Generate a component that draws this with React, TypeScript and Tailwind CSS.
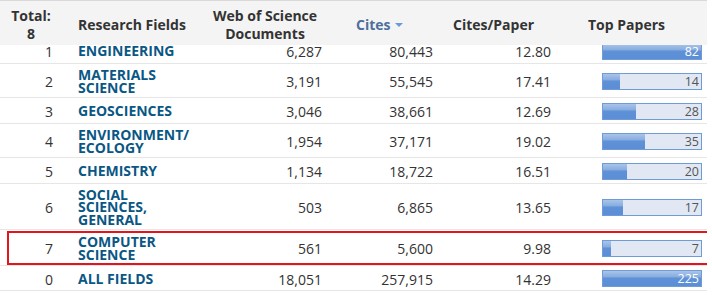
import React from 'react'

type Row = { rank: number; field: string[]; docs: string; cites: string; cpp: string; top: number; h: string; marked?: boolean }

const rows: Row[] = [
  { rank: 1, field: ['ENGINEERING'], docs: '6,287', cites: '80,443', cpp: '12.80', top: 82, h: 'h-[26px]' },
  { rank: 2, field: ['MATERIALS', 'SCIENCE'], docs: '3,191', cites: '55,545', cpp: '17.41', top: 14, h: 'h-[34px]' },
  { rank: 3, field: ['GEOSCIENCES'], docs: '3,046', cites: '38,661', cpp: '12.69', top: 28, h: 'h-[26px]' },
  { rank: 4, field: ['ENVIRONMENT/', 'ECOLOGY'], docs: '1,954', cites: '37,171', cpp: '19.02', top: 35, h: 'h-[34px]' },
  { rank: 5, field: ['CHEMISTRY'], docs: '1,134', cites: '18,722', cpp: '16.51', top: 20, h: 'h-[26px]' },
  { rank: 6, field: ['SOCIAL', 'SCIENCES,', 'GENERAL'], docs: '503', cites: '6,865', cpp: '13.65', top: 17, h: 'h-[46px]' },
  { rank: 7, field: ['COMPUTER', 'SCIENCE'], docs: '561', cites: '5,600', cpp: '9.98', top: 7, h: 'h-[36px]', marked: true },
  { rank: 0, field: ['ALL FIELDS'], docs: '18,051', cites: '257,915', cpp: '14.29', top: 225, h: 'h-[25px]' },
]

const MAX = 82
const cols = 'grid grid-cols-[62px_138px_130px_111px_118px_1fr]'

function Bar({ value }: { value: number }) {
  const pct = Math.min(100, (value / MAX) * 100)
  const full = pct >= 100
  return (
    <div className="relative w-[100px] h-[17px] border border-[#6f9bd6] bg-[#e1e8f4]">
      <div
        className="absolute left-0 top-0 bottom-0 bg-[linear-gradient(to_bottom,#a9c4ea_0%,#86acdf_40%,#5f91d7_46%,#5b8ed6_100%)]"
        style={{ width: `${pct}%` }}
      />
      <span className={`absolute right-[2px] top-0 text-[12.5px] leading-[15px] ${full ? 'text-white' : 'text-[#555]'}`}>
        {value}
      </span>
    </div>
  )
}

export default function App() {
  return (
    <div className="w-[712px] h-[295px] bg-white overflow-hidden text-[14px] text-[#333]" style={{ fontFamily: '"Open Sans", "Noto Sans", sans-serif' }}>
      <div className="w-[707px] border-t border-[#d9d9d9]">
        {/* Header */}
        <div className={`${cols} h-[44px] pt-[3px] bg-[#f4f4f4] font-bold leading-[18px] items-center relative z-10`}>
          <div className="text-center">Total:<br />8</div>
          <div className="pl-[16px]">Research Fields</div>
          <div className="text-center">Web of Science<br />Documents</div>
          <div className="pl-[26px] flex items-center gap-[4px] text-[#4d6f9c]">
            Cites
            <span className="w-0 h-0 border-l-[4px] border-r-[4px] border-t-[4px] border-l-transparent border-r-transparent border-t-[#6b9bd6]" />
          </div>
          <div className="pl-[12px]">Cites/Paper</div>
          <div className="pl-[29px]">Top Papers</div>
        </div>

        {/* Body */}
        <div className="overflow-hidden">
          <div className="-mt-[7px]">
            {rows.map(r => (
              <div key={r.rank} className={`${cols} ${r.h} items-center border-b border-[#e6e6e6] relative`}>
                <div className="text-right pr-[9px] pt-[2px]">{r.rank}</div>
                <div className="pl-[16px] pt-[2px] font-bold text-[#0a5784] leading-[12.5px]">
                  {r.field.map(l => (
                    <div key={l}>{l}</div>
                  ))}
                </div>
                <div className="text-right pr-[8px] pt-[2px]">{r.docs}</div>
                <div className="text-right pr-[8px] pt-[2px]">{r.cites}</div>
                <div className="text-right pr-[8px] pt-[2px]">{r.cpp}</div>
                <div className="pl-[43px] pt-[1px]">
                  <Bar value={r.top} />
                </div>
                {r.marked && (
                  <div className="absolute top-[1px] bottom-[0px] left-[7px] right-[-3px] border-2 border-[#e3141c] pointer-events-none" />
                )}
              </div>
            ))}
          </div>
        </div>
      </div>
    </div>
  )
}
